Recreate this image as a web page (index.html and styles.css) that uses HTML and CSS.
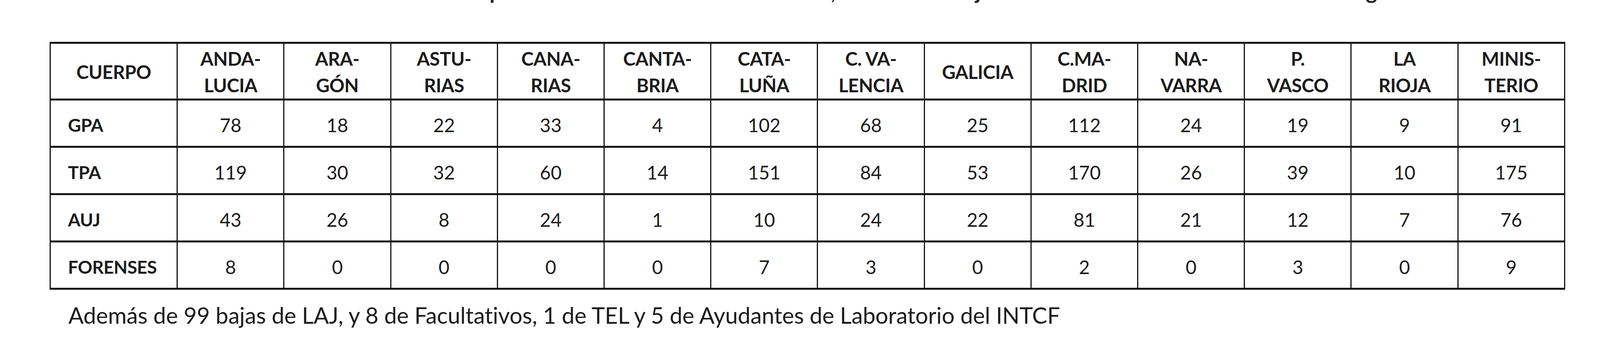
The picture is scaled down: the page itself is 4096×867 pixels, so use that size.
FILE: index.html
```html
<!DOCTYPE html>
<html lang="es">
<head>
<meta charset="utf-8">
<title>Bajas por cuerpo</title>
<link rel="stylesheet" href="styles.css">
</head>
<body>
<div class="page">
  <div class="title-clip" aria-hidden="true">
    <div class="title-line"><span class="t1">p</span><span class="t2">,</span><span class="t3">j</span><span class="t4">g</span></div>
  </div>
  <table class="bajas">
    <colgroup>
      <col class="c-first">
      <col class="c"><col class="c"><col class="c"><col class="c"><col class="c"><col class="c"><col class="c">
      <col class="c"><col class="c"><col class="c"><col class="c"><col class="c"><col class="c">
    </colgroup>
    <thead>
      <tr>
        <th>CUERPO</th>
        <th>ANDA-<br>LUCIA</th>
        <th>ARA-<br>GÓN</th>
        <th>ASTU-<br>RIAS</th>
        <th>CANA-<br>RIAS</th>
        <th>CANTA-<br>BRIA</th>
        <th>CATA-<br>LUÑA</th>
        <th>C. VA-<br>LENCIA</th>
        <th>GALICIA</th>
        <th>C.MA-<br>DRID</th>
        <th>NA-<br>VARRA</th>
        <th>P.<br>VASCO</th>
        <th>LA<br>RIOJA</th>
        <th>MINIS-<br>TERIO</th>
      </tr>
    </thead>
    <tbody>
      <tr><th class="rh">GPA</th><td>78</td><td>18</td><td>22</td><td>33</td><td>4</td><td>102</td><td>68</td><td>25</td><td>112</td><td>24</td><td>19</td><td>9</td><td>91</td></tr>
      <tr><th class="rh">TPA</th><td>119</td><td>30</td><td>32</td><td>60</td><td>14</td><td>151</td><td>84</td><td>53</td><td>170</td><td>26</td><td>39</td><td>10</td><td>175</td></tr>
      <tr><th class="rh">AUJ</th><td>43</td><td>26</td><td>8</td><td>24</td><td>1</td><td>10</td><td>24</td><td>22</td><td>81</td><td>21</td><td>12</td><td>7</td><td>76</td></tr>
      <tr><th class="rh">FORENSES</th><td>8</td><td>0</td><td>0</td><td>0</td><td>0</td><td>7</td><td>3</td><td>0</td><td>2</td><td>0</td><td>3</td><td>0</td><td>9</td></tr>
    </tbody>
  </table>
  <p class="note">Además de 99 bajas de LAJ, y 8 de Facultativos, 1 de TEL y 5 de Ayudantes de Laboratorio del INTCF</p>
</div>
</body>
</html>
```
FILE: styles.css
```css
html, body {
  margin: 0;
  padding: 0;
  background: #ffffff;
}

body {
  font-family: Lato, "Liberation Sans", sans-serif;
  color: #1c1c1c;
}

.page {
  width: 4096px;
  height: 867px;
  overflow: hidden;
  padding-left: 127px;
  box-sizing: border-box;
}

.title-clip {
  height: 11px;
  overflow: hidden;
  position: relative;
}

.title-line {
  position: absolute;
  left: 0;
  top: -51px;
  display: flex;
  font-weight: 700;
  font-size: 56px;
  line-height: 56px;
  color: #222;
  white-space: pre;
}

.title-line .t1 { margin-left: 1126px; }
.title-line .t2 { margin-left: 842px; }
.title-line .t3 { margin-left: 357px; }
.title-line .t4 { margin-left: 985px; }

.bajas {
  margin-top: 96px;
  border-collapse: collapse;
  table-layout: fixed;
  width: 3880px;
}

.bajas col.c-first { width: 325px; }
.bajas col.c { width: 273px; }

.bajas th,
.bajas td {
  border-top: 5px solid #151515;
  border-bottom: 5px solid #151515;
  border-left: 3px solid #151515;
  border-right: 3px solid #151515;
  padding: 0;
  text-align: center;
  vertical-align: middle;
}

.bajas thead th {
  height: 129px;
  font-weight: 700;
  font-size: 48px;
  line-height: 68px;
  letter-spacing: -0.5px;
  padding-top: 4px;
}

.bajas tbody tr {
  height: 121px;
}

.bajas tbody td {
  font-size: 48px;
  font-weight: 400;
  padding-top: 8px;
}

.bajas tbody th.rh {
  text-align: left;
  padding-left: 44px;
  padding-top: 8px;
  font-weight: 700;
  font-size: 46px;
  letter-spacing: -0.5px;
}

.note {
  margin: 30px 0 0 48px;
  font-size: 58px;
  line-height: 70px;
  font-weight: 400;
  letter-spacing: -0.1px;
}
```
